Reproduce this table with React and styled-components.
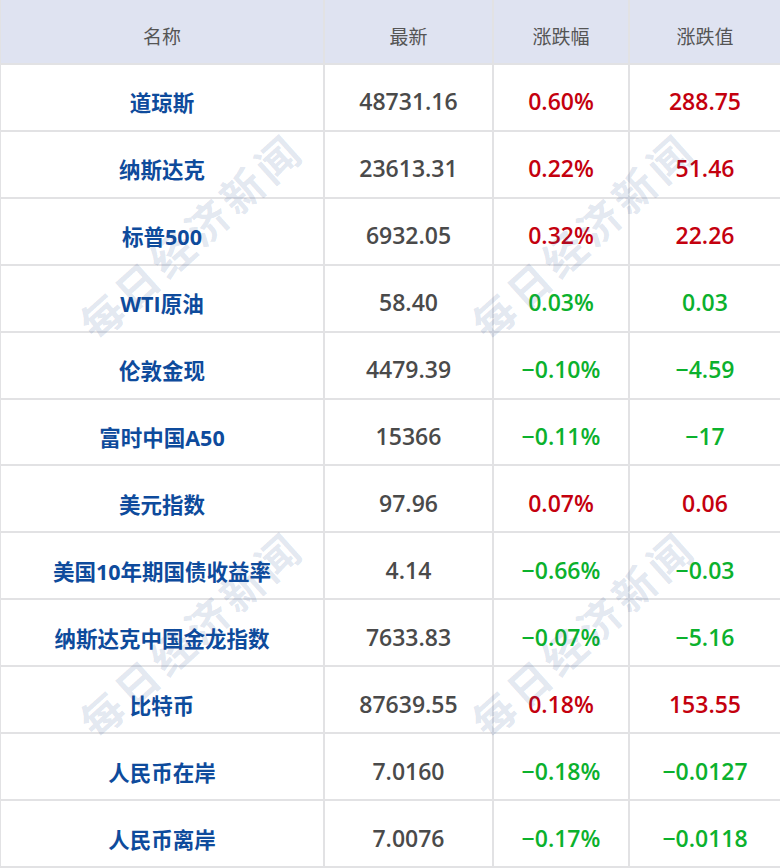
import React from "react";
import styled, { createGlobalStyle } from "styled-components";

const GlobalStyle = createGlobalStyle`
	html, body {
		margin: 0;
		padding: 0;
		background: #fff;
	}
	body {
		font-family: "Noto Sans CJK SC", "Noto Sans", sans-serif;
	}
`;

const Wrap = styled.div`
	position: relative;
	width: 780px;
	height: 868px;
	overflow: hidden;
`;

const Grid = styled.div`
	display: grid;
	grid-template-columns: 322px 167px 134px 1fr;
	grid-template-rows: 63px repeat(12, 1fr);
	gap: 2px;
	height: 866px;
	padding: 0 0 2px 1px;
	background: #e2e2e4;
`;

const Head = styled.div`
	display: flex;
	align-items: center;
	justify-content: center;
	padding-top: 8px;
	background: #dfe3f1;
	color: #555;
	font-size: 19px;
	font-weight: 400;
`;

const Cell = styled.div`
	display: flex;
	align-items: center;
	justify-content: center;
	padding-top: ${(p) => (p.$name ? "9px" : "8px")};
	background: #fff;
	font-family: "Open Sans", "Noto Sans CJK SC", sans-serif;
	font-size: ${(p) => (p.$name ? "21.5px" : "23px")};
	font-weight: ${(p) => (p.$name ? 700 : 600)};
	color: ${(p) =>
		p.$name ? "#0e4b9c" : p.$tone === "up" ? "#c4000e" : p.$tone === "down" ? "#0bb12d" : "#4a4a4a"};
	white-space: nowrap;
`;

const Marks = styled.div`
	position: absolute;
	inset: 0;
	pointer-events: none;
`;

const Mark = styled.span`
	position: absolute;
	left: ${(p) => p.$x}px;
	top: ${(p) => p.$y}px;
	transform: translate(-50%, -50%) rotate(-42deg);
	font-size: 42px;
	font-weight: 700;
	letter-spacing: 5px;
	color: rgba(40, 80, 150, 0.15);
	white-space: nowrap;
`;

const rows = [
	["道琼斯", "48731.16", "0.60%", "288.75"],
	["纳斯达克", "23613.31", "0.22%", "51.46"],
	["标普500", "6932.05", "0.32%", "22.26"],
	["WTI原油", "58.40", "0.03%", "0.03", "down"],
	["伦敦金现", "4479.39", "−0.10%", "−4.59"],
	["富时中国A50", "15366", "−0.11%", "−17"],
	["美元指数", "97.96", "0.07%", "0.06"],
	["美国10年期国债收益率", "4.14", "−0.66%", "−0.03"],
	["纳斯达克中国金龙指数", "7633.83", "−0.07%", "−5.16"],
	["比特币", "87639.55", "0.18%", "153.55"],
	["人民币在岸", "7.0160", "−0.18%", "−0.0127"],
	["人民币离岸", "7.0076", "−0.17%", "−0.0118"],
];

const marks = [
	[190, 235],
	[582, 235],
	[190, 633],
	[582, 633],
];

export default function App() {
	return (
		<Wrap>
			<GlobalStyle />
			<Grid>
				<Head>名称</Head>
				<Head>最新</Head>
				<Head>涨跌幅</Head>
				<Head>涨跌值</Head>
				{rows.map(([name, last, pct, val, force]) => {
					const tone = force || (pct.startsWith("−") ? "down" : "up");
					return (
						<React.Fragment key={name}>
							<Cell $name>{name}</Cell>
							<Cell>{last}</Cell>
							<Cell $tone={tone}>{pct}</Cell>
							<Cell $tone={tone}>{val}</Cell>
						</React.Fragment>
					);
				})}
			</Grid>
			<Marks>
				{marks.map(([x, y]) => (
					<Mark key={`${x}-${y}`} $x={x} $y={y}>
						每日经济新闻
					</Mark>
				))}
			</Marks>
		</Wrap>
	);
}
